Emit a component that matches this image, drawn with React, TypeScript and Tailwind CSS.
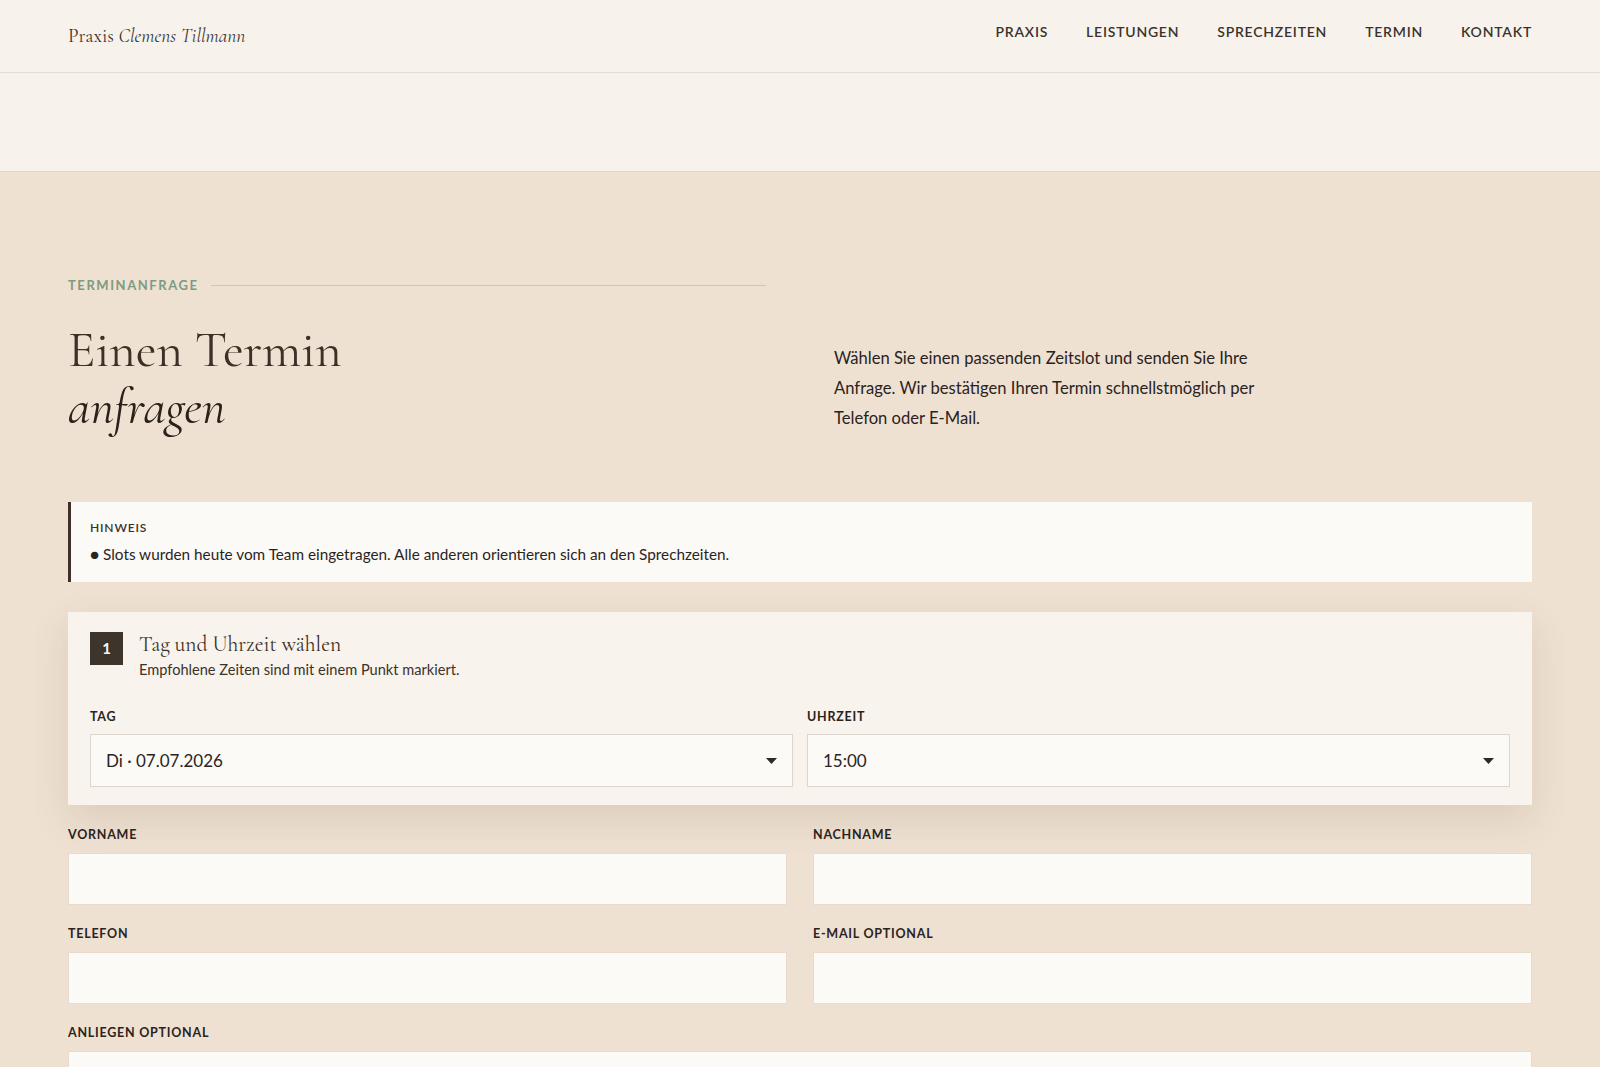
import React from "react";

const serif = "font-['Cormorant_Garamond','Liberation_Serif',serif]";

function Caret() {
  return (
    <svg width="11" height="6" viewBox="0 0 11 6" className="shrink-0">
      <path d="M0 0 L11 0 L5.5 6 Z" fill="#2f2924" />
    </svg>
  );
}

function FakeSelect({ value }: { value: string }) {
  return (
    <div className="h-[53px] flex items-center justify-between pl-[15px] pr-[15px] bg-[#fcfaf6] border border-[#dcd6ce] text-[17px] text-[#2a241f]">
      <span>{value}</span>
      <Caret />
    </div>
  );
}

function Label({ children }: { children: React.ReactNode }) {
  return (
    <div className="h-4 leading-4 text-[12.5px] font-bold tracking-[0.06em] uppercase text-[#2b231c]">
      {children}
    </div>
  );
}

function Input() {
  return <div className="mt-[10px] h-[52px] bg-[#fcfaf6] border border-[#e6dbcd]" />;
}

export default function App() {
  const nav = ["Praxis", "Leistungen", "Sprechzeiten", "Termin", "Kontakt"];
  return (
    <div className="min-h-screen bg-[#eee1d2] font-['Lato',sans-serif] text-[#2d2620]">
      <header className="h-[73px] bg-[#f7f3ec] border-b border-[#e2dcd3] px-[68px] flex items-center justify-between">
        <div className={`${serif} text-[19.5px] text-[#3a322b] mt-[1px]`}>
          Praxis <em>Clemens Tillmann</em>
        </div>
        <nav className="flex items-center gap-[38px] -mt-[9px]">
          {nav.map((n) => (
            <a key={n} className="text-[14px] font-semibold uppercase tracking-[0.055em] text-[#3a332c]">
              {n}
            </a>
          ))}
        </nav>
      </header>
      <div className="h-[99px] bg-[#f7f3ec] border-b border-[#e4d5c5]" />

      <section className="px-[68px] pt-[106px] pb-[80px]">
        <div className="grid grid-cols-2 gap-[68px] items-end">
          <div>
            <div className="flex items-center gap-3">
              <span className="text-[13px] leading-[14px] font-bold uppercase tracking-[0.12em] text-[#7d9b80]">
                Terminanfrage
              </span>
              <span className="flex-1 h-px bg-[#bfcdb9]" />
            </div>
            <h1 className={`${serif} mt-[30px] text-[51px] leading-[57px] font-normal text-[#3d3127]`}>
              Einen Termin
              <br />
              <em className="text-[#2a211a]">anfragen</em>
            </h1>
          </div>
          <p className="text-[16.6px] leading-[30px] text-[#2a231d] mb-[3px]">
            Wählen Sie einen passenden Zeitslot und senden Sie Ihre
            <br />
            Anfrage. Wir bestätigen Ihren Termin schnellstmöglich per
            <br />
            Telefon oder E-Mail.
          </p>
        </div>

        <div className="mt-[66px] bg-[#fcfaf6] border-l-[3px] border-[#3b3129] pl-[19px] py-[18px]">
          <div className="h-4 leading-4 text-[12px] font-semibold uppercase tracking-[0.07em] text-[#3a322b]">
            Hinweis
          </div>
          <div className="mt-[8px] leading-[20px] text-[15.3px] text-[#2a241f]">
            ● Slots wurden heute vom Team eingetragen. Alle anderen orientieren sich an den Sprechzeiten.
          </div>
        </div>

        <div className="mt-[30px] bg-[#f8f3ec] px-[22px] pt-[20px] pb-[18px] shadow-[0_14px_36px_rgba(110,80,50,0.14)]">
          <div className="flex items-start gap-[16px]">
            <div className="w-[33px] h-[33px] bg-[#3d342b] text-[#fbf7f0] flex items-center justify-center text-[15px] font-bold">
              1
            </div>
            <div className="-mt-[1px]">
              <div className={`${serif} text-[21.5px] leading-[26px] text-[#3a2f26]`}>Tag und Uhrzeit wählen</div>
              <div className="mt-[3px] text-[14.6px] leading-[20px] text-[#3a322b]">
                Empfohlene Zeiten sind mit einem Punkt markiert.
              </div>
            </div>
          </div>
          <div className="mt-[29px] grid grid-cols-2 gap-[14px]">
            <div>
              <Label>Tag</Label>
              <div className="mt-[9px]">
                <FakeSelect value="Di · 07.07.2026" />
              </div>
            </div>
            <div>
              <Label>Uhrzeit</Label>
              <div className="mt-[9px]">
                <FakeSelect value="15:00" />
              </div>
            </div>
          </div>
        </div>

        <div className="mt-[22px] grid grid-cols-2 gap-x-[26px] gap-y-[21px]">
          <div>
            <Label>Vorname</Label>
            <Input />
          </div>
          <div>
            <Label>Nachname</Label>
            <Input />
          </div>
          <div>
            <Label>Telefon</Label>
            <Input />
          </div>
          <div>
            <Label>E-Mail optional</Label>
            <Input />
          </div>
          <div className="col-span-2">
            <Label>Anliegen optional</Label>
            <div className="mt-[10px] h-[130px] bg-[#fcfaf6] border border-[#e6dbcd]" />
          </div>
        </div>
      </section>
    </div>
  );
}
